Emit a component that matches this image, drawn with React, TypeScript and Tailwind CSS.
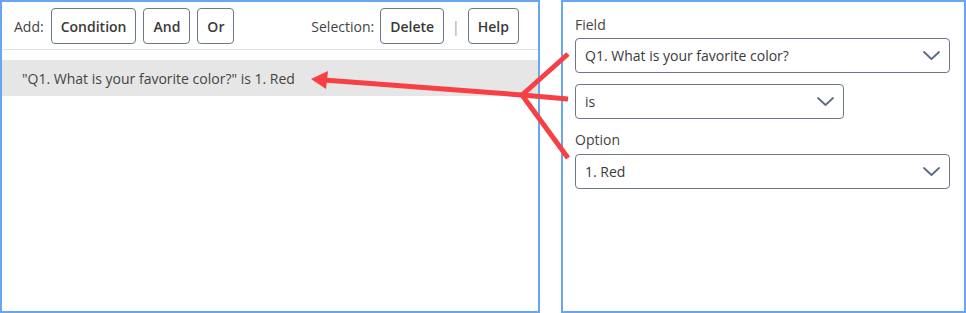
import React from 'react';

const font = { fontFamily: '"Open Sans", "Noto Sans", sans-serif' };

function Chevron() {
  return (
    <svg width="17" height="9" viewBox="0 0 17 9" fill="none" className="shrink-0">
      <path d="M1 1l7.5 7 7.5-7" stroke="#5d6a86" strokeWidth="1.8" strokeLinecap="round" strokeLinejoin="round" />
    </svg>
  );
}

function Select({ value, className }: { value: string; className: string }) {
  return (
    <div className={`h-[35px] flex items-center justify-between pl-[9px] pr-[9px] border border-[#6b7690] rounded-[4px] text-[14px] text-[#3a3a3a] ${className}`}>
      <span>{value}</span>
      <Chevron />
    </div>
  );
}

function ToolButton({ label }: { label: string }) {
  return (
    <button className="h-[36px] px-[9px] border border-[#6b7690] rounded-[4px] bg-white text-[14px] font-semibold text-[#3a3a3a]">
      {label}
    </button>
  );
}

export default function App() {
  return (
    <div className="w-[966px] h-[313px] bg-white flex gap-[21px]" style={font}>
      {/* builder panel */}
      <div className="w-[540px] h-[313px] border-2 border-[#68a5f2] flex flex-col">
        <div className="h-[48px] border-b border-[#e3e3e3] flex items-start pt-[6px] pl-[12px] pr-[19px]">
          <div className="flex items-center gap-[7px]">
            <span className="text-[14px] text-[#444]">Add:</span>
            <ToolButton label="Condition" />
            <ToolButton label="And" />
            <ToolButton label="Or" />
          </div>
          <div className="ml-auto flex items-center gap-[6px]">
            <span className="text-[14px] text-[#444]">Selection:</span>
            <ToolButton label="Delete" />
            <span className="text-[14px] text-[#a3a3a3] px-[2px]">|</span>
            <ToolButton label="Help" />
          </div>
        </div>
        <div className="mt-[10px] h-[36px] bg-[#e6e6e6] flex items-center pl-[20px] text-[14px] text-[#444]">
          "Q1. What is your favorite color?" is 1. Red
        </div>
      </div>

      {/* editor panel */}
      <div className="flex-1 h-[313px] border-2 border-[#68a5f2] pl-[12px] pr-[14px] pt-[13px]">
        <div className="text-[14px] text-[#444] leading-[19px]">Field</div>
        <Select value="Q1. What is your favorite color?" className="mt-[4px] w-full" />
        <Select value="is" className="mt-[11px] w-[269px]" />
        <div className="text-[14px] text-[#444] leading-[19px] mt-[11px]">Option</div>
        <Select value="1. Red" className="mt-[5px] w-full" />
      </div>

      {/* annotation arrows */}
      <svg className="absolute left-0 top-0 pointer-events-none" width="966" height="313">
        <g stroke="#f64044" strokeWidth="5" strokeLinecap="butt" fill="none">
          <line x1="522" y1="95" x2="568" y2="99" />
          <line x1="522" y1="95" x2="568" y2="54" />
          <line x1="522" y1="95" x2="568" y2="158" />
          <line x1="522" y1="95" x2="324" y2="80" />
        </g>
        <polygon points="311,79 328,71 326,89" fill="#f64044" />
      </svg>
    </div>
  );
}
